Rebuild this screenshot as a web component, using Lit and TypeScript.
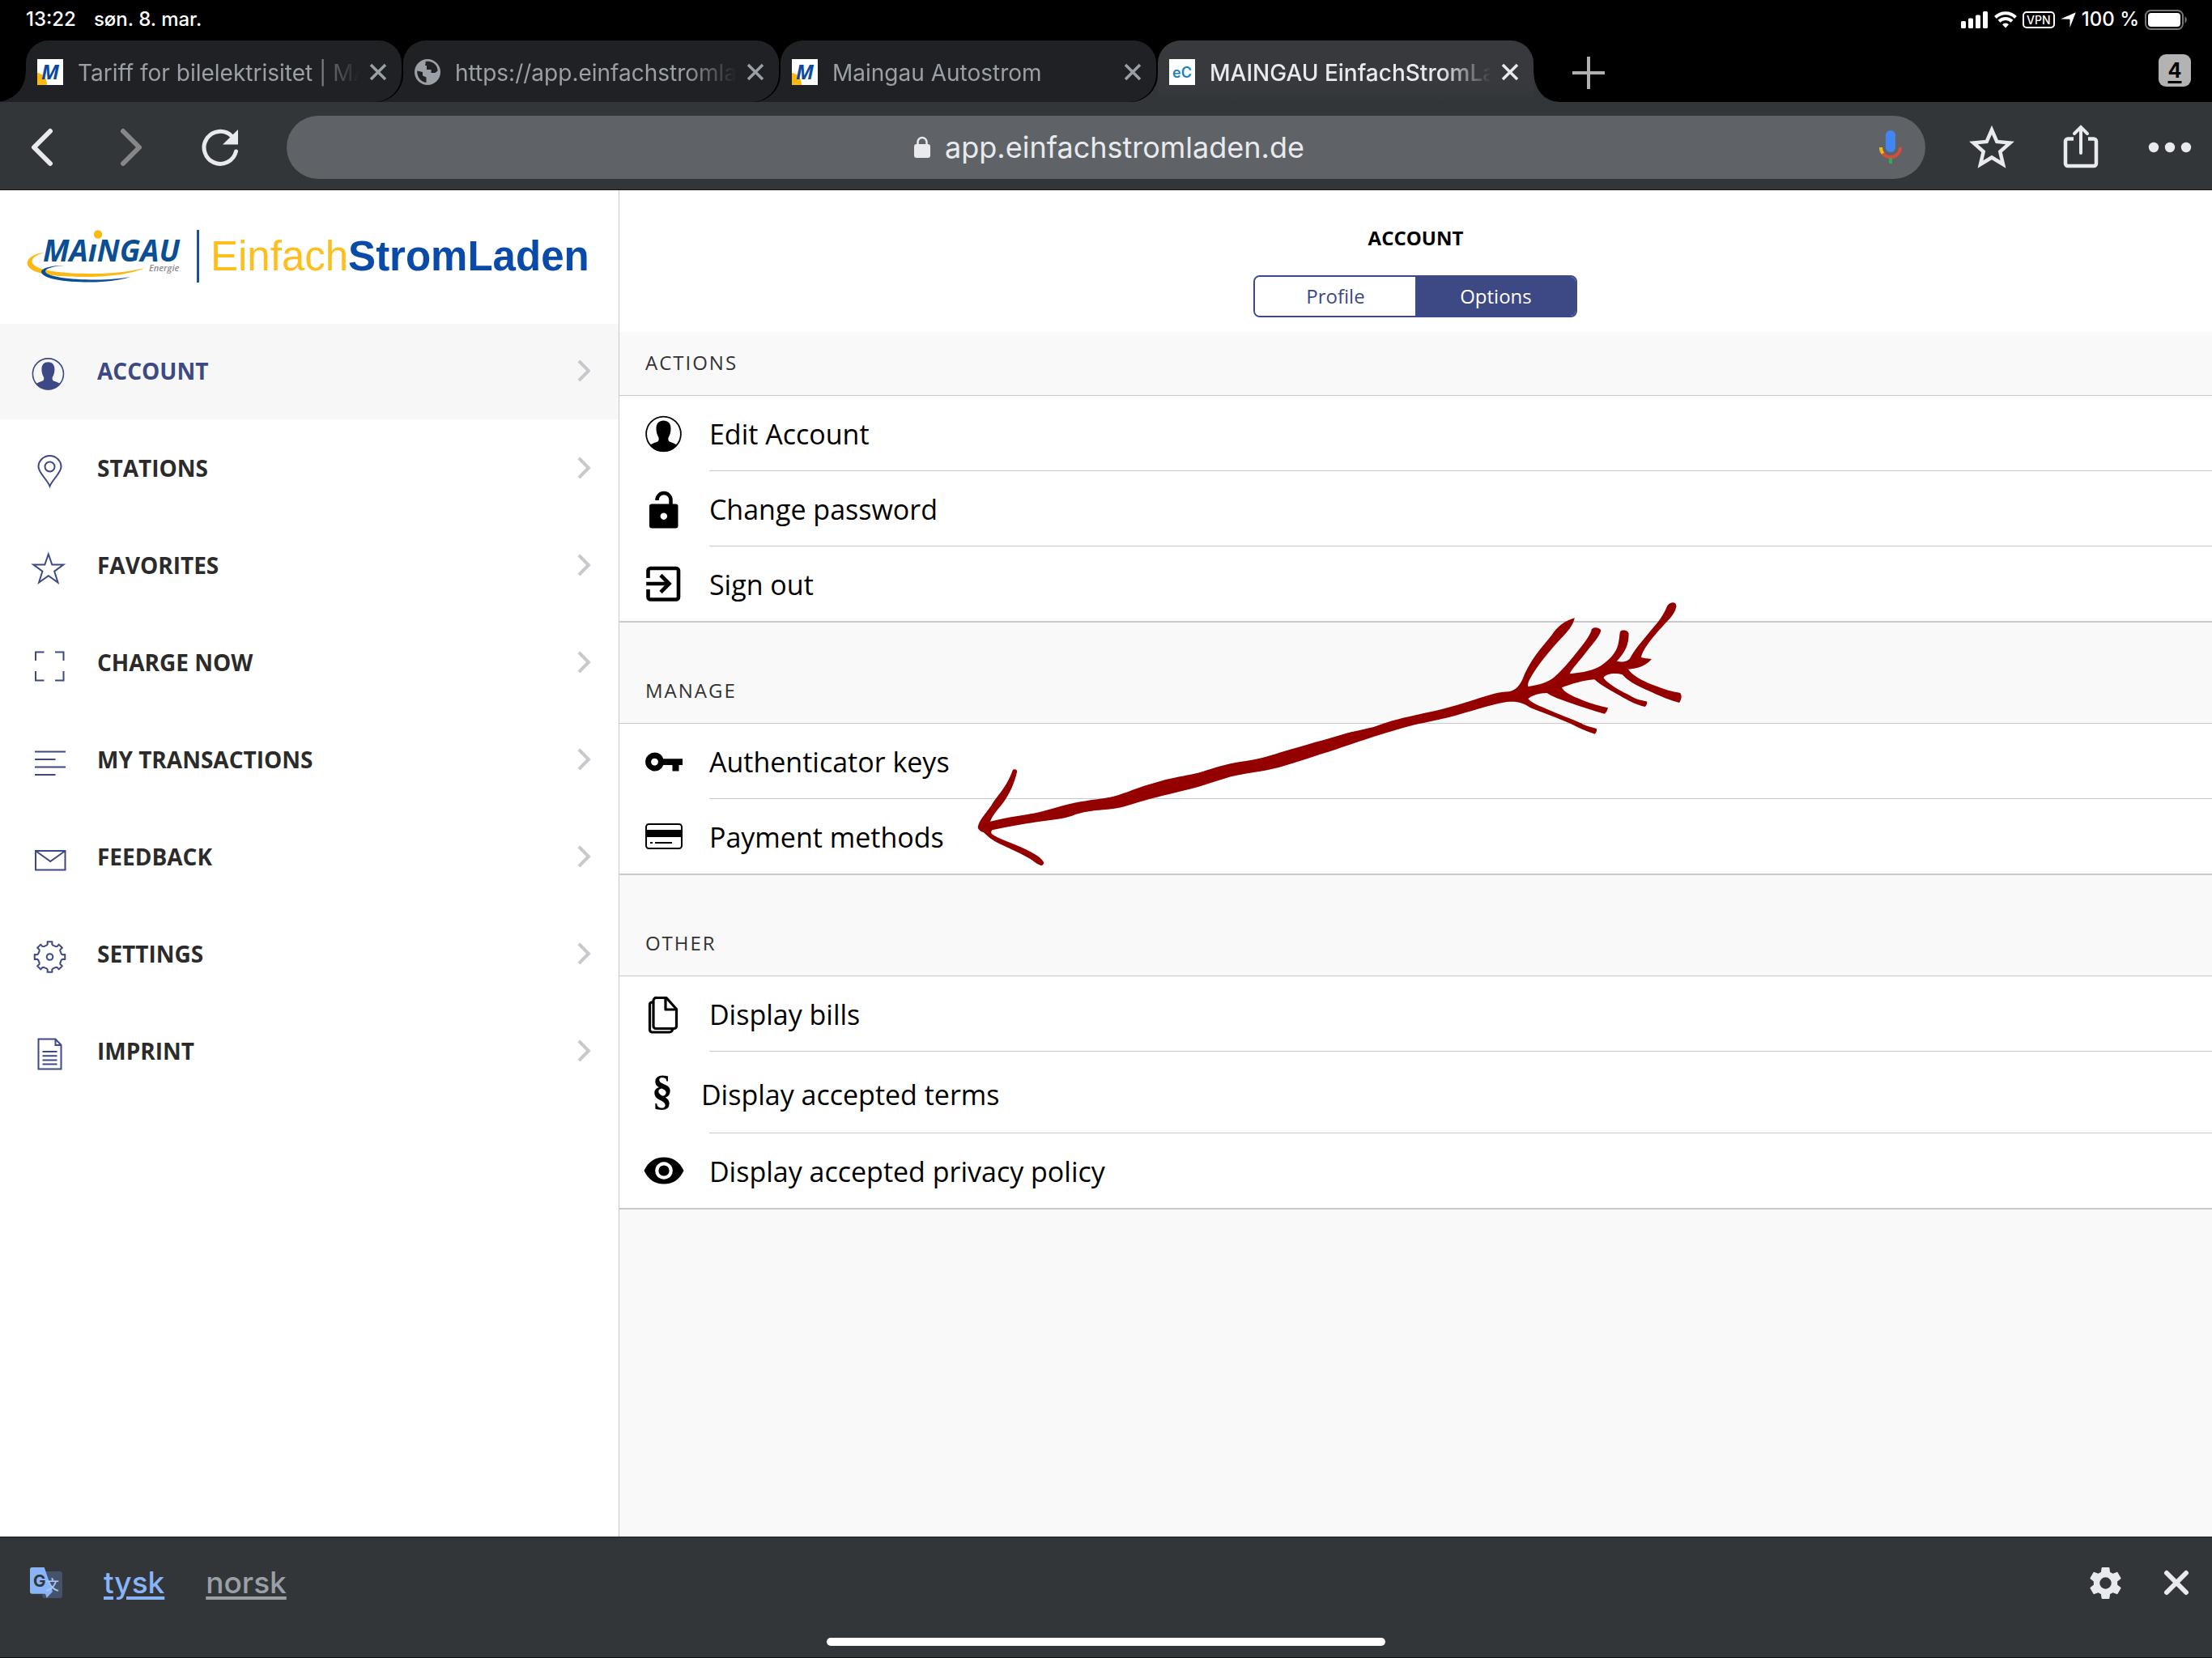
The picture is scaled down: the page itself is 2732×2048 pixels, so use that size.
import { LitElement, html, svg, css, TemplateResult } from "lit";
import { customElement, property, state } from "lit/decorators.js";
import { classMap } from "lit/directives/class-map.js";

/** Outline of a cog with eight blunt teeth, centred on 20,20. */
function cogPath(): string {
  const at = (r: number, deg: number) => {
    const a = (deg * Math.PI) / 180;
    return `${(20 + r * Math.sin(a)).toFixed(2)} ${(20 - r * Math.cos(a)).toFixed(2)}`;
  };
  const points: string[] = [];
  for (let i = 0; i < 8; i++) {
    const c = i * 45;
    points.push(at(14.8, c - 15), at(15.8, c - 10), at(19, c - 9), at(19, c + 9), at(15.8, c + 10), at(14.8, c + 15));
  }
  return `M${points.join("L")}Z`;
}

const PERSON = svg`
  <circle cx="22.5" cy="23" r="21.4" fill="none" stroke="currentColor" stroke-width="1.8"/>
  <path fill="currentColor" d="M22.5 6.5C28 6.5 31.5 10 31.5 16c0 5-1 8-3 11.500c-.5 3 0 4.500 2.500 5.500c3 1 6 2 8.500 4A22 22 0 0 1 5.500 37c2.500-2 5.500-3 8.500-4c2.500-1 3-2.500 2.500-5.500C14.500 24 13.500 21 13.500 16C13.500 10 17 6.500 22.500 6.500z"/>`;

const NAV_ICONS: Record<string, TemplateResult> = {
  account: svg`<g transform="translate(-.6 -.6) scale(.89)">${PERSON}</g>`,
  stations: svg`<path d="M21.500 38.500C18 30 7.500 22 7.500 14.500a14 13.500 0 0 1 28 0C35.500 22 25 30 21.500 38.500z"/><circle cx="21.500" cy="14.500" r="6"/>`,
  favorites: svg`<path d="M19.800 2.500l4.500 13h14L27.200 23.700l4.300 13.800-11.700-8.200-11.700 8.200 4.300-13.800L1.300 15.500h14z"/>`,
  charge: svg`<path d="M4 14V3.500H14.500M28 3.500H38.500V14M38.500 27V38.500H28M14.500 38.500H4V27"/>`,
  transactions: svg`<path d="M3 6.500H41M3 16H28.500M3 25.500H41M3 35H28.500"/>`,
  feedback: svg`<path d="M4 9H40.500V32.500H4zM4 9l18.200 13L40.500 9"/>`,
  settings: svg`<path transform="translate(1.500 0)" stroke-linejoin="round" d=${cogPath()}/><circle cx="21.500" cy="20" r="3.800"/>`,
  imprint: svg`<path d="M7.500 1.500H28.500L35.500 9V38.500H7.500zM28.500 1.500V9H35.500M12.500 17H30.500M12.500 22.200H30.500M12.500 27.400H30.500M12.500 32.600H30.500"/>`,
};

const ROW_ICONS: Record<string, TemplateResult> = {
  person: PERSON,
  unlock: svg`<path fill="none" stroke="currentColor" stroke-width="4.500" d="M14.500 12V11.500a8.500 8.500 0 0 1 17 0V18"/>
    <path fill="currentColor" fill-rule="evenodd" d="M8 16.500H37.500a3 3 0 0 1 3 3V43.500a3 3 0 0 1-3 3H8a3 3 0 0 1-3-3V19.500a3 3 0 0 1 3-3zM22.800 27.500a4.200 4.200 0 1 0 .01 0z"/>`,
  exit: svg`<g fill="none" stroke="currentColor" stroke-width="4.600"><path d="M3.500 16V7a3 3 0 0 1 3-3H38a3 3 0 0 1 3 3V39.500a3 3 0 0 1-3 3H6.500a3 3 0 0 1-3-3V30"/>
    <path d="M1.200 23H29M19 12.500L29.500 23 19 33.500"/></g>`,
  key: svg`<path fill="currentColor" fill-rule="evenodd" d="M11.500 11.500A11.500 11.500 0 0 1 22.300 19.300H46V27H41.500V34.500H33.500V27H22.300A11.500 11.500 0 1 1 11.500 11.500zM11.500 18.700a4.400 4.400 0 1 0 .01 0z"/>`,
  card: svg`<rect x="1" y="8" width="44" height="30" rx="3.500" fill="none" stroke="currentColor" stroke-width="2"/>
    <path fill="currentColor" d="M1 15H45V24H1z"/><path stroke="currentColor" stroke-width="2" d="M6 31H9M12 31H33"/>`,
  bills: svg`<g fill="none" stroke="currentColor" stroke-width="3.200" stroke-linejoin="round"><path d="M14 2.500H26L38.500 16.500V37.500a3 3 0 0 1-3 3H13a3 3 0 0 1-3-3V6a3.500 3.500 0 0 1 4-3.500z"/>
    <path d="M25 3V17H38.500"/><path d="M9 8H8a3 3 0 0 0-2.500 3V42a3 3 0 0 0 3 3H30a3.500 3.500 0 0 0 3.500-3.500"/></g>`,
  paragraph: svg`<text x="21" y="37" text-anchor="middle" class="glyph">§</text>`,
  eye: svg`<path fill="currentColor" fill-rule="evenodd" d="M-1.500 23C3.500 12 12 6.500 23 6.500S42.500 12 47.500 23C42.500 34 34 39.500 23 39.500S3.500 34-1.500 23zM23 12.200a10.800 10.800 0 1 0 .01 0z"/><circle cx="23" cy="23" r="6.600" fill="currentColor"/>`,
};

const CLOSE = svg`<path d="M2 2L20 20M20 2L2 20" stroke="currentColor" stroke-width="3.500" fill="none"/>`;

interface TabInfo {
  title: string;
  icon: "maingau" | "globe" | "ec";
  active?: boolean;
}

@customElement("browser-tabs")
class BrowserTabs extends LitElement {
  static styles = css`
    :host {
      display: block;
      background: #000;
      font-family: Inter, "Liberation Sans", sans-serif;
    }
    button {
      border: 0;
      background: none;
      padding: 0;
      font: inherit;
      color: inherit;
      cursor: pointer;
    }
    .strip {
      display: flex;
      gap: 2px;
      padding-left: 32px;
      height: 76px;
      isolation: isolate;
    }
    .tab {
      position: relative;
      flex: 0 1 464px;
      min-width: 0;
      box-sizing: border-box;
      display: flex;
      align-items: center;
      padding: 2px 18px 0 14px;
      background: #202125;
      color: #9aa0a6;
      border-radius: 28px 28px 34px 0;
      box-shadow: 2px 0 0 #000;
    }
    .tab:nth-child(1) {
      z-index: 4;
    }
    .tab:nth-child(2) {
      z-index: 3;
    }
    .tab:nth-child(3) {
      z-index: 2;
    }
    .tab:nth-child(4) {
      z-index: 1;
    }
    .tab::before {
      content: "";
      position: absolute;
      right: 100%;
      bottom: 0;
      width: 36px;
      height: 36px;
      background: radial-gradient(circle at 0 0, transparent 35px, #202125 36px);
    }
    .tab.active {
      background: linear-gradient(#38393d 70%, #323639);
      color: #e8eaed;
      border-radius: 28px 28px 0 0;
      box-shadow: none;
    }
    .tab.active::before {
      background: radial-gradient(circle at 0 0, transparent 35px, #323639 36px);
    }
    .tab.active::after {
      content: "";
      position: absolute;
      left: 100%;
      bottom: 0;
      width: 30px;
      height: 36px;
      background: radial-gradient(ellipse 30px 36px at 100% 0, transparent 97%, #323639 100%);
    }
    .title {
      flex: 1;
      min-width: 0;
      display: flex;
      align-items: center;
      gap: 18px;
      text-align: left;
      font-size: 28px;
      line-height: 36px;
    }
    .active .title {
      font-weight: 500;
    }
    .favicon {
      flex: none;
      width: 32px;
      height: 32px;
      overflow: visible;
    }
    .text {
      flex: 1;
      min-width: 0;
      padding-top: 2px;
      overflow: hidden;
      white-space: nowrap;
      mask-image: linear-gradient(to right, #000 82%, transparent);
    }
    .close {
      flex: none;
      width: 22px;
      height: 22px;
      margin-left: 12px;
    }
    .close svg {
      display: block;
      width: 22px;
      height: 22px;
    }
    .new {
      width: 40px;
      height: 40px;
      margin: 20px 0 0 46px;
      color: #b0b0b0;
    }
    .count {
      width: 40px;
      height: 40px;
      margin: 17px 26px 0 auto;
      border-radius: 9px;
      background: #b3b3b3;
      color: #000;
      font-size: 25px;
      font-weight: 700;
      text-decoration: underline;
      text-decoration-thickness: 3px;
      text-underline-offset: 4px;
      line-height: 36px;
    }
    .m {
      font: italic 700 25px "Open Sans", sans-serif;
      fill: #0b4a9e;
    }
    .ec {
      font: 600 18px Inter, sans-serif;
      fill: #1d84b5;
    }
  `;

  @property({ attribute: false }) tabs: TabInfo[] = [];

  private favicon(kind: TabInfo["icon"]) {
    switch (kind) {
      case "maingau":
        return svg`<rect width="32" height="32" fill="#fff"/><path d="M0 17C8 18 12 24 12 32H0z" fill="#fcb813"/><text class="m" x="5" y="25">M</text>`;
      case "globe":
        return svg`<circle cx="16" cy="16" r="16" fill="#9aa0a6"/>
          <path fill="#202125" d="M13.500 3L11.500 8H15V13H20.500V17H25.500L28.500 14.500C29 8 22.500 2.500 16 2.800zM3.200 14.500L10 16V20.500L14.500 22.500V29C8 28 3 23 3.200 14.500z" />
          <path fill="#9aa0a6" d="M10 6L14 3.500 13 8 10 10z"/>`;
      default:
        return svg`<rect width="32" height="32" fill="#fff"/><text class="ec" x="16" y="23" text-anchor="middle">eC</text>`;
    }
  }

  render() {
    return html`<div class="strip">
      ${this.tabs.map(
        (t) => html`<div class=${classMap({ tab: true, active: !!t.active })}>
          <button class="title">
            <svg class="favicon" viewBox="0 0 32 32" aria-hidden="true">${this.favicon(t.icon)}</svg>
            <span class="text">${t.title}</span>
          </button>
          <button class="close" aria-label="Close tab"><svg viewBox="0 0 22 22">${CLOSE}</svg></button>
        </div>`
      )}
      <button class="new" aria-label="New tab">
        <svg width="40" height="40" viewBox="0 0 40 40"><path d="M20 0V40M0 20H40" stroke="currentColor" stroke-width="4" /></svg>
      </button>
      <button class="count" aria-label="Open tabs">${this.tabs.length}</button>
    </div>`;
  }
}

@customElement("status-bar")
class StatusBar extends LitElement {
  static styles = css`
    :host {
      display: flex;
      align-items: center;
      justify-content: space-between;
      height: 48px;
      padding: 0 30px 2px 32px;
      background: #000;
      color: #fff;
      font: 500 24px/28px Inter, "Liberation Sans", sans-serif;
    }
    .group {
      display: flex;
      align-items: center;
      gap: 8px;
    }
    .left {
      gap: 22px;
    }
    .right {
      gap: 7px;
    }
    svg {
      display: block;
    }
    .vpn {
      box-sizing: border-box;
      width: 40px;
      height: 21px;
      border: 2px solid #fff;
      border-radius: 5px;
      font-size: 14px;
      line-height: 17px;
      text-align: center;
    }
  `;

  render() {
    return html`
      <div class="group left"><span>13:22</span><span>søn. 8. mar.</span></div>
      <div class="group right">
        <svg width="34" height="21" viewBox="0 0 34 21" fill="#fff">
          <rect x="0" y="12" width="6" height="9" rx="1.500" /><rect x="9" y="8.500" width="6" height="12.500" rx="1.500" />
          <rect x="18" y="4.500" width="6" height="16.500" rx="1.500" /><rect x="27" y="0" width="6" height="21" rx="1.500" />
        </svg>
        <svg width="28" height="21" viewBox="0 0 28 21" fill="none" stroke="#fff" stroke-width="4">
          <path d="M1.500 7.500a17.500 17.500 0 0 1 25 0" /><path d="M6 12.300a11.500 11.500 0 0 1 16 0" />
          <path d="M14 20.500l-4-4.300a5.500 5.500 0 0 1 8 0z" fill="#fff" stroke="none" />
        </svg>
        <span class="vpn">VPN</span>
        <svg width="19" height="19" viewBox="0 0 19 19"><path d="M18.800 .2L11.500 19V8.800L.2 8.600z" fill="#fff" /></svg>
        <span>100 %</span>
        <svg width="53" height="25" viewBox="0 0 53 25">
          <rect x="1" y="1" width="46" height="23" rx="6.500" fill="none" stroke="#777" stroke-width="2" />
          <rect x="4" y="4" width="40" height="17" rx="4" fill="#fff" />
          <path d="M49.500 8.500c3 1 3 7 0 8z" fill="#777" />
        </svg>
      </div>
    `;
  }
}

@customElement("browser-toolbar")
class BrowserToolbar extends LitElement {
  static styles = css`
    :host {
      display: flex;
      align-items: center;
      box-sizing: border-box;
      height: 109px;
      padding: 4px 24px 0;
      border-bottom: 1px solid #17181b;
      background: #323639;
      color: #e8eaed;
      font-family: Inter, "Liberation Sans", sans-serif;
    }
    button {
      display: grid;
      place-items: center;
      flex: none;
      width: 56px;
      height: 56px;
      border: 0;
      padding: 0;
      background: none;
      color: inherit;
      cursor: pointer;
    }
    svg {
      display: block;
    }
    .nav {
      display: flex;
      gap: 54px;
    }
    .off {
      color: #858789;
    }
    .box {
      flex: 1;
      min-width: 0;
      display: flex;
      align-items: center;
      justify-content: center;
      height: 78px;
      margin: 0 54px;
      padding: 0 15px 0 79px;
      border-radius: 39px;
      background: #5f6368;
      box-sizing: border-box;
    }
    .url {
      flex: 1;
      display: flex;
      align-items: center;
      justify-content: center;
      gap: 18px;
    }
    input {
      field-sizing: content;
      width: auto;
      min-width: 0;
      border: 0;
      padding: 0;
      background: none;
      color: #e8eaed;
      font: 36px/46px Inter, "Liberation Sans", sans-serif;
      outline: none;
    }
    .tools {
      display: flex;
      gap: 54px;
    }
    .tall {
      padding-bottom: 4px;
    }
  `;

  render() {
    const chevron = (d: string) =>
      html`<svg width="28" height="48" viewBox="0 0 28 48" fill="none" stroke="currentColor" stroke-width="6" stroke-linecap="round" stroke-linejoin="round"><path d=${d} /></svg>`;
    return html`
      <div class="nav">
        <button aria-label="Back">${chevron("M24 4L4 24L24 44")}</button>
        <button class="off" aria-label="Forward">${chevron("M4 4L24 24L4 44")}</button>
        <button aria-label="Reload">
          <svg width="46" height="46" viewBox="0 0 46 46">
            <path d="M42.500 28A20 20 0 1 1 37 9" fill="none" stroke="currentColor" stroke-width="5" stroke-linecap="round" />
            <path d="M45 1V19.500H26z" fill="currentColor" />
          </svg>
        </button>
      </div>
      <div class="box">
        <label class="url">
          <svg width="20" height="28" viewBox="0 0 20 28">
            <rect y="10" width="20" height="17" rx="3" fill="currentColor" />
            <path d="M4.500 11V7.500a5.500 5.500 0 0 1 11 0V11" fill="none" stroke="currentColor" stroke-width="2.500" />
          </svg>
          <input type="text" aria-label="Address" value="app.einfachstromladen.de" />
        </label>
        <button aria-label="Voice search">
          <svg width="28" height="42" viewBox="0 0 28 42" fill="none" stroke-width="4">
            <rect x="8" y="0" width="12" height="27" rx="6" fill="#4285f4" />
            <path d="M2 21a12 12 0 0 0 3 8" stroke="#f4b912" />
            <path d="M4.500 28.500A12 12 0 0 0 26 21" stroke="#db4b3c" />
            <path d="M14 34V41" stroke="#34a853" />
          </svg>
        </button>
      </div>
      <div class="tools">
        <button class="tall" aria-label="Bookmark">
          <svg width="56" height="54" viewBox="0 0 56 54" fill="none" stroke="currentColor" stroke-width="4.500">
            <path d="M28 6.500L34.300 21L50.500 22.500L38.300 33.200L42 49L28 40.500L14 49L17.700 33.200L5.500 22.500L21.700 21z" />
          </svg>
        </button>
        <button class="tall" aria-label="Share">
          <svg width="44" height="54" viewBox="0 0 44 54" fill="none" stroke="currentColor" stroke-width="4.500" stroke-linecap="round">
            <path d="M13 17.500H6a3 3 0 0 0-3 3V48a3 3 0 0 0 3 3H38a3 3 0 0 0 3-3V20.500a3 3 0 0 0-3-3H31" stroke-linecap="butt" />
            <path d="M22 35V4M14 11L22 3L30 11" stroke-width="4" />
          </svg>
        </button>
        <button aria-label="More">
          <svg width="54" height="14" viewBox="0 0 54 14" fill="currentColor">
            <circle cx="7" cy="7" r="6.200" /><circle cx="27" cy="7" r="6.200" /><circle cx="47" cy="7" r="6.200" />
          </svg>
        </button>
      </div>
    `;
  }
}

interface NavEntry {
  id: string;
  label: string;
}

@customElement("side-menu")
class SideMenu extends LitElement {
  static styles = css`
    :host {
      display: block;
      background: #fff;
      font-family: "Open Sans", "Noto Sans", sans-serif;
    }
    .brand {
      display: flex;
      align-items: center;
      gap: 14px;
      height: 165px;
      padding: 0 33px 2px;
      box-sizing: border-box;
    }
    .logo {
      flex: none;
      display: block;
    }
    .maingau {
      font: italic 700 37px "Open Sans", sans-serif;
      fill: #0a4f93;
    }
    .energie {
      font: italic 600 11px "Open Sans", sans-serif;
      fill: #8c8c8c;
    }
    .bar {
      width: 3px;
      height: 65px;
      background: #1a50a0;
    }
    .wordmark {
      font: 51px/66px "Liberation Sans", Arial, sans-serif;
      color: #fcbf20;
      white-space: nowrap;
    }
    .wordmark b {
      color: #0a4aa8;
    }
    nav {
      display: flex;
      flex-direction: column;
      gap: 2px;
    }
    a {
      display: flex;
      align-items: center;
      gap: 40px;
      height: 118px;
      padding: 0 35px 3px 40px;
      box-sizing: border-box;
      color: #2b2b2b;
      text-decoration: none;
      font-size: 28px;
      line-height: 38px;
      font-weight: 700;
    }
    a.current {
      background: #f7f7f7;
      color: #3d4984;
    }
    .icon {
      flex: none;
      width: 40px;
      height: 40px;
      margin-top: 9px;
      overflow: visible;
      color: #3d4984;
      fill: none;
      stroke: #3d4984;
      stroke-width: 2;
    }
    .current .icon {
      stroke: none;
    }
    .label {
      flex: 1;
    }
    .chevron {
      flex: none;
      width: 16px;
      height: 28px;
      fill: none;
      stroke: #c7c7cc;
      stroke-width: 4;
    }
  `;

  @state() private current = "account";

  private entries: NavEntry[] = [
    { id: "account", label: "ACCOUNT" },
    { id: "stations", label: "STATIONS" },
    { id: "favorites", label: "FAVORITES" },
    { id: "charge", label: "CHARGE NOW" },
    { id: "transactions", label: "MY TRANSACTIONS" },
    { id: "feedback", label: "FEEDBACK" },
    { id: "settings", label: "SETTINGS" },
    { id: "imprint", label: "IMPRINT" },
  ];

  render() {
    return html`
      <div class="brand">
        <svg class="logo" width="196" height="66" viewBox="0 0 196 66">
          <path d="M22 28C8 29-1 36 1 43C5 55 35 58 75 58C102 58 130 54 146 47C125 52 102 54.500 75 54C40 53.500 12 50 7 41C5 36 10 31 22 28z" fill="#fcb813" />
          <path d="M46 44C30 44 18 47 18 52C19 60 45 64.500 78 64.500C98 64.500 116 62 128 58C114 60.500 98 62 78 61.500C48 61 23 57 23 51C23 48 32 45 46 44z" fill="#0a4f93" />
          <circle cx="88" cy="5.500" r="5.200" fill="#fcb813" />
          <text class="maingau" x="20" y="39">MAıNGAU</text>
          <text class="energie" x="151" y="51">Energie</text>
        </svg>
        <span class="bar"></span>
        <span class="wordmark">Einfach<b>StromLaden</b></span>
      </div>
      <nav>
        ${this.entries.map(
          (e) => html`<a
            href="#${e.id}"
            class=${classMap({ current: e.id === this.current })}
            @click=${() => (this.current = e.id)}
          >
            <svg class="icon" viewBox="0 0 40 40" aria-hidden="true">${NAV_ICONS[e.id]}</svg>
            <span class="label">${e.label}</span>
            <svg class="chevron" viewBox="0 0 16 28" aria-hidden="true"><path d="M2 2L14 14L2 26" /></svg>
          </a>`
        )}
      </nav>
    `;
  }
}

interface Row {
  icon: string;
  label: string;
  tall?: boolean;
}

@customElement("account-options")
class AccountOptions extends LitElement {
  static styles = css`
    :host {
      display: block;
      background: #f9f9f9;
      color: #000;
      font-family: "Open Sans", "Noto Sans", sans-serif;
    }
    header {
      display: flex;
      flex-direction: column;
      align-items: center;
      gap: 30px;
      height: 175px;
      box-sizing: border-box;
      padding-top: 43px;
      background: #fff;
    }
    h1 {
      margin: 0;
      font-size: 24px;
      line-height: 32px;
      font-weight: 700;
    }
    .segment {
      display: flex;
      width: 400px;
      height: 52px;
      box-sizing: border-box;
      border: 2px solid #3d4984;
      border-radius: 8px;
      overflow: hidden;
    }
    .segment button {
      flex: 1;
      border: 0;
      padding: 0;
      background: #fff;
      color: #3d4984;
      font: 24px/32px "Open Sans", "Noto Sans", sans-serif;
      cursor: pointer;
    }
    .segment .on {
      background: #3d4984;
      color: #fff;
    }
    h2 {
      margin: 0;
      padding: 68px 32px 24px;
      font-size: 24px;
      line-height: 32px;
      font-weight: 400;
      letter-spacing: 2px;
      color: #333;
    }
    section:first-of-type h2 {
      padding-top: 22px;
    }
    ul {
      margin: 0;
      padding: 0;
      list-style: none;
      background: #fff;
      border-top: 1px solid #c8c7cc;
      border-bottom: 2px solid #c8c7cc;
    }
    li {
      display: flex;
      padding-left: 32px;
    }
    button.row {
      flex: 1;
      display: flex;
      align-items: center;
      gap: 33px;
      border: 0;
      padding: 0;
      background: none;
      color: inherit;
      font: 34px/46px "Open Sans", "Noto Sans", sans-serif;
      text-align: left;
      cursor: pointer;
    }
    .icon {
      flex: none;
      display: block;
      width: 46px;
      height: 46px;
      overflow: visible;
    }
    .label {
      flex: 1;
      padding: 24px 0 22px;
      border-bottom: 1px solid #c8c7cc;
    }
    li:last-child .label {
      border-bottom: 0;
    }
    .tall .label {
      padding: 30px 0 24px;
      text-indent: -10px;
    }
    .glyph {
      font: 700 52px "Liberation Serif", serif;
    }
  `;

  @state() private view = "Options";

  private sections: { title: string; rows: Row[] }[] = [
    {
      title: "ACTIONS",
      rows: [
        { icon: "person", label: "Edit Account" },
        { icon: "unlock", label: "Change password" },
        { icon: "exit", label: "Sign out" },
      ],
    },
    {
      title: "MANAGE",
      rows: [
        { icon: "key", label: "Authenticator keys" },
        { icon: "card", label: "Payment methods" },
      ],
    },
    {
      title: "OTHER",
      rows: [
        { icon: "bills", label: "Display bills" },
        { icon: "paragraph", label: "Display accepted terms", tall: true },
        { icon: "eye", label: "Display accepted privacy policy" },
      ],
    },
  ];

  render() {
    return html`
      <header>
        <h1>ACCOUNT</h1>
        <div class="segment">
          ${["Profile", "Options"].map(
            (v) => html`<button class=${classMap({ on: v === this.view })} @click=${() => (this.view = v)}>${v}</button>`
          )}
        </div>
      </header>
      ${this.sections.map(
        (s) => html`<section>
          <h2>${s.title}</h2>
          <ul>
            ${s.rows.map(
              (r) => html`<li class=${classMap({ tall: !!r.tall })}>
                <button class="row">
                  <svg class="icon" viewBox="0 0 46 46" aria-hidden="true">${ROW_ICONS[r.icon]}</svg>
                  <span class="label">${r.label}</span>
                </button>
              </li>`
            )}
          </ul>
        </section>`
      )}
    `;
  }
}

@customElement("translate-bar")
class TranslateBar extends LitElement {
  static styles = css`
    :host {
      display: block;
      box-sizing: border-box;
      height: 150px;
      border-top: 1px solid #17181b;
      border-bottom: 1px solid #0c0d0e;
      background: #323639;
      font-family: Inter, "Liberation Sans", sans-serif;
    }
    .line {
      display: flex;
      align-items: center;
      height: 112px;
      padding: 0 20px 0 37px;
      box-sizing: border-box;
    }
    svg {
      display: block;
    }
    a {
      margin-left: 51px;
      font-size: 37px;
      line-height: 48px;
      font-weight: 500;
      color: #9aa0a6;
      text-decoration-thickness: 4px;
      text-underline-offset: 4px;
    }
    a.source {
      color: #8ab4f8;
    }
    button {
      display: grid;
      place-items: center;
      width: 48px;
      height: 48px;
      border: 0;
      padding: 0;
      background: none;
      color: #e8eaed;
      cursor: pointer;
    }
    .settings {
      margin: 0 40px 0 auto;
    }
    .home {
      width: 690px;
      height: 10px;
      margin: 12px auto 0;
      border-radius: 5px;
      background: #fff;
    }
    .g {
      font: 700 62px Inter, sans-serif;
      fill: #323639;
    }
    .zh {
      font: 500 50px "Noto Sans CJK SC", sans-serif;
      fill: #a9c8fa;
    }
  `;

  render() {
    return html`
      <div class="line">
        <svg width="40" height="38" viewBox="0 0 120 114" aria-hidden="true">
          <rect x="46" y="15" width="74" height="99" rx="8" fill="#44526a" />
          <path d="M8 0H53L84 90L62 113L57 98H8a8 8 0 0 1-8-8V8a8 8 0 0 1 8-8z" fill="#8ab4f8" />
          <text class="g" x="12" y="73">G</text>
          <text class="zh" x="58" y="85">文</text>
        </svg>
        <a class="source" href="#tysk">tysk</a>
        <a href="#norsk">norsk</a>
        <button class="settings" aria-label="Translate settings">
          <svg width="47" height="47" viewBox="0 0 24 24" fill="currentColor">
            <path d="M19.430 12.980c.04-.32.07-.64.07-.98s-.03-.66-.07-.98l2.110-1.650c.19-.15.24-.42.12-.64l-2-3.460c-.12-.22-.39-.3-.61-.22l-2.490 1c-.52-.4-1.080-.73-1.690-.98l-.38-2.650C14.460 2.180 14.250 2 14 2h-4c-.25 0-.46.18-.49.42l-.38 2.650c-.61.25-1.170.59-1.690.98l-2.490-1c-.23-.09-.49 0-.61.22l-2 3.460c-.13.22-.07.49.12.64l2.110 1.650c-.04.32-.07.65-.07.98s.03.66.07.98l-2.110 1.650c-.19.15-.24.42-.12.64l2 3.460c.12.22.39.3.61.22l2.490-1c.52.4 1.080.73 1.690.98l.38 2.650c.03.24.24.42.49.42h4c.25 0 .46-.18.49-.42l.38-2.650c.61-.25 1.170-.59 1.690-.98l2.490 1c.23.09.49 0 .61-.22l2-3.460c.12-.22.07-.49-.12-.64l-2.110-1.650zM12 15.700a3.700 3.700 0 1 1 0-7.400 3.700 3.700 0 0 1 0 7.400z" />
          </svg>
        </button>
        <button aria-label="Close">
          <svg width="32" height="32" viewBox="0 0 32 32"><path d="M4 4L28 28M28 4L4 28" stroke="currentColor" stroke-width="6" stroke-linecap="round" /></svg>
        </button>
      </div>
      <div class="home"></div>
    `;
  }
}

@customElement("app-root")
class AppRoot extends LitElement {
  static styles = css`
    :host {
      display: flex;
      flex-direction: column;
      min-height: 100vh;
      background: #000;
    }
    .page {
      position: relative;
      flex: 1;
      display: flex;
      overflow: hidden;
    }
    side-menu {
      flex: 0 0 28%;
      box-sizing: border-box;
      border-right: 1px solid #c8c7cc;
    }
    account-options {
      flex: 1;
      min-width: 0;
    }
    .arrow {
      position: absolute;
      left: 1160px;
      top: 485px;
      pointer-events: none;
    }
  `;

  private tabs: TabInfo[] = [
    { title: "Tariff for bilelektrisitet | MA", icon: "maingau" },
    { title: "https://app.einfachstromla", icon: "globe" },
    { title: "Maingau Autostrom", icon: "maingau" },
    { title: "MAINGAU EinfachStromLa", icon: "ec", active: true },
  ];

  render() {
    return html`
      <status-bar></status-bar>
      <browser-tabs .tabs=${this.tabs}></browser-tabs>
      <browser-toolbar></browser-toolbar>
      <div class="page">
        <side-menu></side-menu>
        <account-options></account-options>
        <svg class="arrow" width="960" height="360" viewBox="0 0 1568 1080" preserveAspectRatio="none" fill="#940000">
          <path
            d="M78 905C80 880 92 860 105 825C120 780 135 760 148 695C150 688 158 690 157 700C152 740 143 780 130 812C118 840 107 862 103 884C130 872 160 862 188 855C225 842 250 822 285 811C310 803 330 800 350 792C380 778 400 757 440 738C480 717 500 715 525 703C550 688 575 672 610 662C640 655 660 645 690 627C740 600 780 580 820 558C850 543 870 540 890 525C920 505 950 495 985 480C1020 467 1050 450 1080 433C1110 415 1130 403 1150 403C1165 395 1170 380 1176 360C1190 290 1215 240 1235 195C1248 160 1262 140 1282 130C1278 160 1268 180 1255 205C1232 250 1205 310 1192 355C1188 368 1187 377 1188 384C1210 378 1228 368 1240 350C1260 320 1285 260 1300 225C1310 200 1315 185 1316 172C1320 162 1333 165 1335 176C1332 200 1318 225 1308 250C1292 290 1276 318 1272 337C1300 332 1320 325 1335 307C1352 285 1366 260 1370 225C1373 200 1372 190 1374 180C1378 172 1390 175 1391 188C1391 230 1384 255 1367 290C1378 296 1390 290 1394 278C1405 240 1430 190 1450 145C1462 115 1465 100 1469 84C1475 68 1488 68 1487 88C1484 115 1475 130 1462 155C1445 190 1420 240 1416 275C1422 280 1428 280 1437 282C1428 302 1415 317 1390 320C1400 345 1420 365 1450 385C1470 400 1480 403 1495 408C1499 420 1497 432 1493 444C1475 435 1455 420 1440 407C1410 385 1390 365 1378 340C1365 332 1345 335 1340 352C1352 380 1375 400 1398 422C1408 433 1418 435 1428 440C1428 448 1427 453 1424 459C1405 450 1395 440 1380 425C1355 400 1335 380 1322 358C1300 360 1275 375 1256 388C1260 405 1275 418 1298 435C1318 450 1335 457 1349 463C1348 472 1346 480 1342 485C1320 475 1295 458 1272 444C1255 433 1240 425 1226 408C1210 408 1195 418 1188 429C1195 445 1210 455 1235 475C1260 495 1285 510 1300 525C1312 535 1318 535 1326 540C1327 548 1326 553 1323 560C1305 550 1290 538 1275 523C1245 498 1215 480 1192 462C1180 445 1165 437 1145 441C1110 452 1070 478 1030 497C990 515 960 522 925 543C880 567 840 592 800 617C760 640 720 665 685 684C655 698 630 702 600 713C570 725 545 745 510 762C470 780 430 797 400 814C375 828 360 838 330 841C310 844 290 848 268 863C250 875 225 877 200 885C170 893 140 904 107 916C105 920 104 924 106 930C120 950 150 965 175 988C190 1002 205 1015 211 1036C211 1043 209 1046 206 1048C198 1044 190 1030 178 1017C160 998 140 982 120 965C105 952 97 938 90 925C82 920 78 912 78 905z"
          />
        </svg>
      </div>
      <translate-bar></translate-bar>
    `;
  }
}
